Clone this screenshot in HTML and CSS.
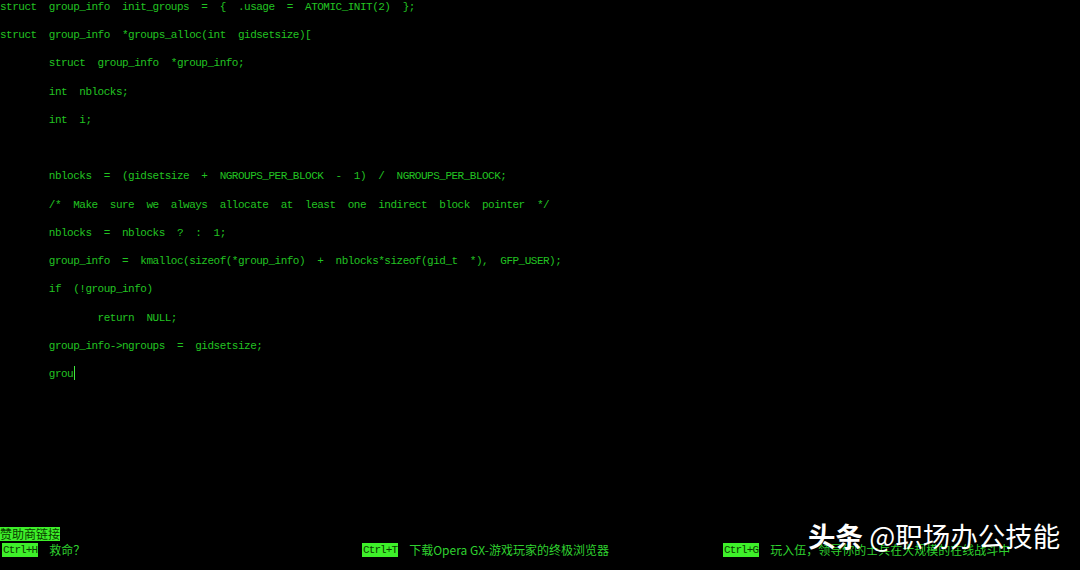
FILE: index.html
```html
<!DOCTYPE html>
<html lang="zh-cn">
<head>
<meta charset="utf-8">
<title>groups_alloc</title>
<link rel="stylesheet" href="styles.css">
</head>
<body>
  <div id="screen">
    <pre class="code">struct  group_info  init_groups  =  {  .usage  =  ATOMIC_INIT(2)  };
struct  group_info  *groups_alloc(int  gidsetsize)[
        struct  group_info  *group_info;
        int  nblocks;
        int  i;

        nblocks  =  (gidsetsize  +  NGROUPS_PER_BLOCK  -  1)  /  NGROUPS_PER_BLOCK;
        /*  Make  sure  we  always  allocate  at  least  one  indirect  block  pointer  */
        nblocks  =  nblocks  ?  :  1;
        group_info  =  kmalloc(sizeof(*group_info)  +  nblocks*sizeof(gid_t  *),  GFP_USER);
        if  (!group_info)
                return  NULL;
        group_info-&gt;ngroups  =  gidsetsize;
        grou<span class="cursor"></span></pre>

    <!-- Sponsor bar at the bottom -->
    <div class="footer">
      <div class="row"><span class="label">赞助商链接</span></div>
      <div class="links">
        <div class="link"><span class="key">Ctrl+H</span><span class="ad">救命？</span></div>
        <div class="link"><span class="key">Ctrl+T</span><span class="ad">下载Opera GX-游戏玩家的终极浏览器</span></div>
        <div class="link"><span class="key">Ctrl+G</span><span class="ad">玩入伍，领导你的士兵在大规模的在线战斗中</span></div>
      </div>
    </div>

    <p class="mark"><b>头条</b> @职场办公技能</p>
  </div>
</body>
</html>
```

FILE: styles.css
```css
html, body {
  margin: 0;
  padding: 0;
  background: #000;
}

#screen {
  position: relative;
  width: 1080px;
  height: 570px;
  overflow: hidden;
  display: flex;
  flex-direction: column;
  background: #000;
}

/* Code listing */
.code {
  flex: 1;
  margin: -7px 0 0 0;
  font-family: "Liberation Mono", monospace;
  font-size: 11px;
  letter-spacing: -0.5px;
  line-height: 28.23px;
  color: #22c322;
  white-space: pre;
}

.cursor {
  display: inline-block;
  width: 1px;
  height: 14px;
  margin-left: 1px;
  vertical-align: -3px;
  background: #3ee83e;
}

/* Sponsor bar */
.footer {
  padding-bottom: 13px;
  font-family: "Noto Sans CJK SC", "Liberation Mono", monospace;
  font-size: 12px;
  line-height: 14px;
  color: #2fd12f;
}

.row {
  height: 14px;
  margin-bottom: 2px;
}

.label {
  display: inline-block;
  background: #3ef02a;
  color: #0b3d00;
  line-height: 14px;
}

.links {
  display: grid;
  grid-template-columns: 360px 361px 1fr;
  padding-left: 2px;
}

.link {
  display: flex;
  gap: 11px;
  white-space: nowrap;
}

.key {
  font-family: "Liberation Mono", monospace;
  font-size: 11px;
  letter-spacing: -0.9px;
  background: #3ef02a;
  color: #0b3d00;
  padding: 0 1px;
}

/* Watermark */
.mark {
  position: absolute;
  left: 808px;
  top: 517px;
  margin: 0;
  font-family: "Noto Sans CJK SC", "Noto Sans", sans-serif;
  font-size: 27.5px;
  line-height: 36px;
  color: #fff;
  white-space: nowrap;
}

.mark b {
  font-weight: 700;
}
```
